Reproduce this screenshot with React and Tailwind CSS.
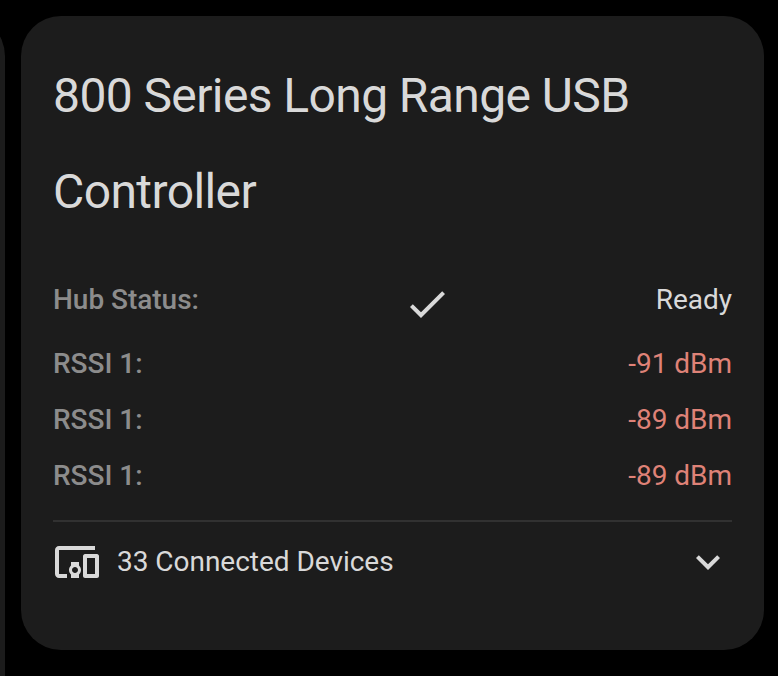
const icons = {
  check: 'M21,7L9,19L3.5,13.5L4.91,12.09L9,16.17L19.59,5.59L21,7Z',
  chevron: 'M7.41,8.58L12,13.17L16.59,8.58L18,10L12,16L6,10L7.41,8.58Z',
  devices:
    'M3 6H21V4H3C1.9 4 1 4.9 1 6V18C1 19.1 1.9 20 3 20H7V18H3V6M13 12H9V13.78C8.39 14.33 8 15.11 8 16C8 16.89 8.39 17.67 9 18.22V20H13V18.22C13.61 17.67 14 16.88 14 16S13.61 14.33 13 13.78V12M11 17.5C10.17 17.5 9.5 16.83 9.5 16S10.17 14.5 11 14.5 12.5 15.17 12.5 16 11.83 17.5 11 17.5M22 8H16C15.5 8 15 8.5 15 9V19C15 19.5 15.5 20 16 20H22C22.5 20 23 19.5 23 19V9C23 8.5 22.5 8 22 8M21 18H17V10H21V18Z',
};

const readings = ['-91 dBm', '-89 dBm', '-89 dBm'];

function Icon({ path }) {
  return (
    <svg viewBox="0 0 24 24" className="size-12 shrink-0 fill-current" aria-hidden="true">
      <path d={path} />
    </svg>
  );
}

export default function App() {
  return (
    <div className="flex h-[676px] w-[778px] gap-4 overflow-hidden bg-black pt-4 font-[Roboto,sans-serif] text-[28px] leading-10 tracking-[-0.03px] text-[#d9d9d9] antialiased">
      <div className="w-[5px] shrink-0 overflow-hidden">
        <div className="-ml-[100px] h-[720px] w-[105px] rounded-tr-[40px] bg-[#1c1c1c]" />
      </div>
      <main className="h-[634px] w-[743px] shrink-0 rounded-[40px] bg-[#1c1c1c] p-8">
        <h1 className="text-[48px] leading-[96px] tracking-[-0.0125em]">
          800 Series Long Range USB Controller
        </h1>
        <div className="mt-10 flex flex-col gap-4">
          <div className="flex h-12 justify-between">
            <span className="font-medium text-[#8c8c8c]">Hub Status:</span>
            <Icon path={icons.check} />
            <span>Ready</span>
          </div>
          {readings.map((value, index) => (
            <div key={index} className="flex justify-between">
              <span className="font-medium text-[#8c8c8c]">RSSI 1:</span>
              <span className="text-[#df8277]">{value}</span>
            </div>
          ))}
        </div>
        <div className="mt-6 h-0.5 bg-[#313131]" />
        <button className="mt-4 flex h-12 w-full items-center">
          <Icon path={icons.devices} />
          <span className="ml-4 flex-1 text-left tracking-[-0.03px]">33 Connected Devices</span>
          <Icon path={icons.chevron} />
        </button>
      </main>
    </div>
  );
}
